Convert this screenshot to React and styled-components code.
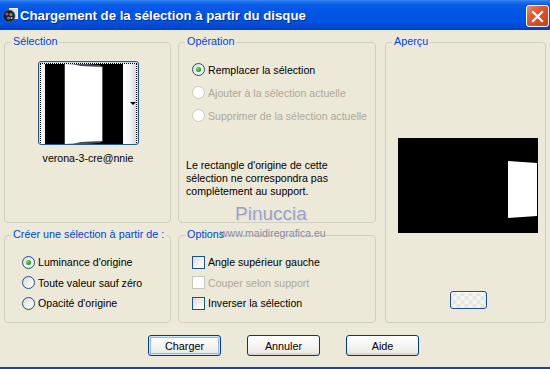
import React from "react";
import styled, { createGlobalStyle } from "styled-components";

const Global = createGlobalStyle`
  html, body { margin: 0; padding: 0; background: #ECE9D8; }
  body { font-family: "Liberation Sans", Arial, sans-serif; }
  * { box-sizing: border-box; }
`;

const Window = styled.div`
  position: relative;
  width: 550px;
  height: 369px;
  display: flex;
  flex-direction: column;
  background: #ECE9D8;
  overflow: hidden;
  font-family: "Liberation Sans", Arial, sans-serif;
  font-size: 10.6px;
  color: #000;
`;

const TitleBar = styled.div`
  height: 30px;
  flex-shrink: 0;
  display: flex;
  align-items: center;
  padding-left: 2px;
  background: linear-gradient(
    to bottom,
    #3A8CF4 0px,
    #1C6EEE 2px,
    #0A5CE6 5px,
    #0055E5 12px,
    #0052E0 22px,
    #0047D0 27px,
    #003FC0 30px
  );
`;

const TitleIconBox = styled.span`
  width: 16px;
  height: 16px;
  display: flex;
  flex-shrink: 0;
`;

const TitleText = styled.span`
  margin-left: 2px;
  color: #fff;
  font-weight: bold;
  font-size: 13.2px;
  text-shadow: 1px 1px 0 #0A2A8C;
  white-space: nowrap;
`;

const CloseButton = styled.span`
  margin-left: auto;
  margin-right: 1px;
  margin-top: 2px;
  width: 23px;
  height: 22px;
  border: 1px solid #fff;
  border-radius: 3px;
  background: linear-gradient(135deg, #F08E6B 0%, #E2582F 35%, #CF3F16 100%);
  display: flex;
  align-items: center;
  justify-content: center;
`;

const Body = styled.div`
  flex: 1;
  display: flex;
  flex-direction: column;
  padding: 12px 0 0 4px;
`;

const Grid = styled.div`
  display: grid;
  grid-template-columns: 167px 198px 163px;
  grid-template-rows: 181px 88px;
  column-gap: 7px;
  row-gap: 12px;
`;

const Group = styled.div`
  position: relative;
  border: 1px solid #D0D0BF;
  border-radius: 4px;
  grid-column: ${(p) => p.$col};
  grid-row: ${(p) => p.$row};
  margin-left: ${(p) => p.$ml || 0}px;
  display: flex;
  flex-direction: column;
  align-items: ${(p) => p.$align || "stretch"};
  padding: ${(p) => p.$pad || "0"};
`;

const Legend = styled.span`
  position: absolute;
  top: -9px;
  left: 6px;
  padding: 0 2px;
  background: #ECE9D8;
  color: #0046D5;
  font-size: 10.8px;
  line-height: 14px;
  white-space: nowrap;
`;

const Thumb = styled.div`
  width: 101px;
  height: 84px;
  border: 1px solid #2A5A8C;
  border-radius: 3px;
  background: #fff;
  padding: 1px;
  box-shadow: inset 0 0 0 1px #C2D5EE;
`;

const ThumbInner = styled.div`
  width: 100%;
  height: 100%;
  border: 1px dotted #000;
  display: flex;
`;

const Caption = styled.div`
  margin-top: 6px;
  line-height: 14px;
`;

const OptionRow = styled.div`
  display: flex;
  align-items: center;
  gap: 3px;
  height: ${(p) => p.$h}px;
  color: ${(p) => (p.$disabled ? "#ACA899" : "#000")};
  white-space: nowrap;
`;

const RadioCircle = styled.span`
  width: 13px;
  height: 13px;
  flex-shrink: 0;
  border-radius: 50%;
  border: 1px solid ${(p) => (p.$disabled ? "#CAC8BB" : "#1C5180")};
  background: ${(p) =>
    p.$disabled ? "#FFFFFF" : "linear-gradient(135deg, #DCDCD7 0%, #F2F2EE 60%, #FFFFFF 100%)"};
  display: flex;
  align-items: center;
  justify-content: center;
  &::after {
    content: "";
    display: ${(p) => (p.$checked ? "block" : "none")};
    width: 5px;
    height: 5px;
    border-radius: 50%;
    background: radial-gradient(circle at 35% 35%, #6FE26B 0%, #21A121 60%, #178017 100%);
  }
`;

const CheckBox = styled.span`
  width: 13px;
  height: 13px;
  flex-shrink: 0;
  border: 1px solid ${(p) => (p.$disabled ? "#CAC8BB" : "#1C5180")};
  background: ${(p) =>
    p.$disabled ? "#FFFFFF" : "linear-gradient(135deg, #DCDCD7 0%, #F2F2EE 60%, #FFFFFF 100%)"};
`;

const OptionList = styled.div`
  display: flex;
  flex-direction: column;
  padding: ${(p) => p.$pad};
`;

const Note = styled.div`
  margin-top: 32px;
  padding-left: 7px;
  line-height: 13px;
`;

const Preview = styled.div`
  margin-top: 95px;
  width: 140px;
  height: 95px;
  display: flex;
`;

const SmallButton = styled.div`
  margin-top: 58px;
  width: 37px;
  height: 18px;
  border: 1px solid #1F4E86;
  border-radius: 3px;
  background:
    repeating-conic-gradient(#F4F4F1 0% 25%, #E6E6E0 0% 50%) 50% 50% / 8px 8px;
  box-shadow: inset 0 1px 0 #fff;
`;

const ButtonRow = styled.div`
  display: flex;
  gap: 26px;
  margin-top: 12px;
  padding-left: 144px;
`;

const Button = styled.button`
  width: 73px;
  height: 21px;
  padding: 0;
  border: 1px solid #003C74;
  border-radius: 3px;
  font-family: "Liberation Sans", Arial, sans-serif;
  font-size: 10.8px;
  color: #000;
  background: linear-gradient(to bottom, #FFFFFF 0%, #F7F7F4 40%, #ECEBE6 85%, #D6D0C5 100%);
  box-shadow: ${(p) =>
    p.$default ? "inset 0 0 0 1px #CEE7FF, inset 0 0 0 2px #98B8EA" : "none"};
`;

const BottomEdge = styled.div`
  height: 2px;
  flex-shrink: 0;
  background: #0A3FE0;
`;

const WatermarkBig = styled.div`
  position: absolute;
  left: 235px;
  top: 204px;
  font-family: "Liberation Sans", Arial, sans-serif;
  font-size: 19px;
  line-height: 1;
  color: #9E9EBA;
  text-shadow: 0 0 1px #F6F6FF, 1px 1px 0 #D6D6E4;
  pointer-events: none;
`;

const WatermarkSmall = styled.div`
  position: absolute;
  left: 220px;
  top: 228px;
  font-family: "Liberation Sans", Arial, sans-serif;
  font-size: 10.5px;
  line-height: 1;
  color: #8A8A9E;
  pointer-events: none;
`;

function AppIcon() {
  return (
    <svg width="16" height="16" viewBox="0 0 16 16">
      <rect x="7.5" y="1.5" width="8" height="10" fill="#CFE2FF" stroke="#fff" />
      <circle cx="7" cy="9" r="6" fill="#1E1E28" stroke="#5A5A70" strokeWidth="0.8" />
      <circle cx="5" cy="7" r="1.6" fill="#E23B3B" />
      <circle cx="9" cy="7.5" r="1.5" fill="#3BC04A" />
      <circle cx="6.5" cy="11" r="1.5" fill="#3B7DE2" />
      <circle cx="9.5" cy="11" r="1" fill="#F2D23B" />
    </svg>
  );
}

function CloseIcon() {
  return (
    <svg width="13" height="13" viewBox="0 0 13 13">
      <path d="M2 2 L11 11 M11 2 L2 11" stroke="#fff" strokeWidth="2.2" strokeLinecap="square" />
    </svg>
  );
}

function ThumbImage() {
  return (
    <svg width="96" height="80" viewBox="0 0 96 80" preserveAspectRatio="none">
      <defs>
        <linearGradient id="strip" x1="0" x2="1" y1="0" y2="0">
          <stop offset="0" stopColor="#FFFFFF" />
          <stop offset="0.6" stopColor="#F2F2F2" />
          <stop offset="1" stopColor="#D8D8D8" />
        </linearGradient>
      </defs>
      <rect x="0" y="0" width="96" height="80" fill="#fff" />
      <rect x="4" y="0" width="79" height="80" fill="#000" />
      <polygon points="24,0 58,1 62,3 62,77 58,79 24,80" fill="#fff" />
      <polygon points="32,0 58,1 62,3 40,2" fill="#444" />
      <polygon points="32,80 58,79 62,77 40,78" fill="#444" />
      <rect x="83" y="0" width="13" height="80" fill="url(#strip)" />
      <polygon points="90,38 96,38 93,41" fill="#000" />
    </svg>
  );
}

function PreviewImage() {
  return (
    <svg width="140" height="95" viewBox="0 0 140 95">
      <rect x="0" y="0" width="140" height="95" fill="#000" />
      <polygon points="110,23 139,25 139,78 110,80" fill="#fff" />
    </svg>
  );
}

function Radio({ label, checked, disabled, h }) {
  return (
    <OptionRow $h={h} $disabled={disabled}>
      <RadioCircle $checked={checked} $disabled={disabled} />
      <span>{label}</span>
    </OptionRow>
  );
}

function Check({ label, disabled, h }) {
  return (
    <OptionRow $h={h} $disabled={disabled}>
      <CheckBox $disabled={disabled} />
      <span>{label}</span>
    </OptionRow>
  );
}

export default function App() {
  return (
    <>
      <Global />
      <Window>
        <TitleBar>
          <TitleIconBox>
            <AppIcon />
          </TitleIconBox>
          <TitleText>Chargement de la sélection à partir du disque</TitleText>
          <CloseButton>
            <CloseIcon />
          </CloseButton>
        </TitleBar>
        <Body>
          <Grid>
            <Group $col="1" $row="1" $align="center" $pad="18px 0 0 1px">
              <Legend>Sélection</Legend>
              <Thumb>
                <ThumbInner>
                  <ThumbImage />
                </ThumbInner>
              </Thumb>
              <Caption>verona-3-cre@nnie</Caption>
            </Group>

            <Group $col="2" $row="1">
              <Legend>Opération</Legend>
              <OptionList $pad="15px 0 0 13px">
                <Radio h={23} checked label="Remplacer la sélection" />
                <Radio h={23} disabled label="Ajouter à la sélection actuelle" />
                <Radio h={23} disabled label="Supprimer de la sélection actuelle" />
              </OptionList>
              <Note>
                Le rectangle d'origine de cette
                <br />
                sélection ne correspondra pas
                <br />
                complètement au support.
              </Note>
            </Group>

            <Group $col="3" $row="1 / span 2" $ml={2} $align="center" $pad="0 0 0 5px">
              <Legend>Aperçu</Legend>
              <Preview>
                <PreviewImage />
              </Preview>
              <SmallButton />
            </Group>

            <Group $col="1" $row="2">
              <Legend>Créer une sélection à partir de :</Legend>
              <OptionList $pad="16px 0 0 17px">
                <Radio h={20.5} checked label="Luminance d'origine" />
                <Radio h={20.5} label="Toute valeur sauf zéro" />
                <Radio h={20.5} label="Opacité d'origine" />
              </OptionList>
            </Group>

            <Group $col="2" $row="2">
              <Legend>Options</Legend>
              <OptionList $pad="16px 0 0 13px">
                <Check h={20.5} label="Angle supérieur gauche" />
                <Check h={20.5} disabled label="Couper selon support" />
                <Check h={20.5} label="Inverser la sélection" />
              </OptionList>
            </Group>
          </Grid>

          <ButtonRow>
            <Button $default>Charger</Button>
            <Button>Annuler</Button>
            <Button>Aide</Button>
          </ButtonRow>
        </Body>
        <BottomEdge />
        <WatermarkBig>Pinuccia</WatermarkBig>
        <WatermarkSmall>www.maidiregrafica.eu</WatermarkSmall>
      </Window>
    </>
  );
}
